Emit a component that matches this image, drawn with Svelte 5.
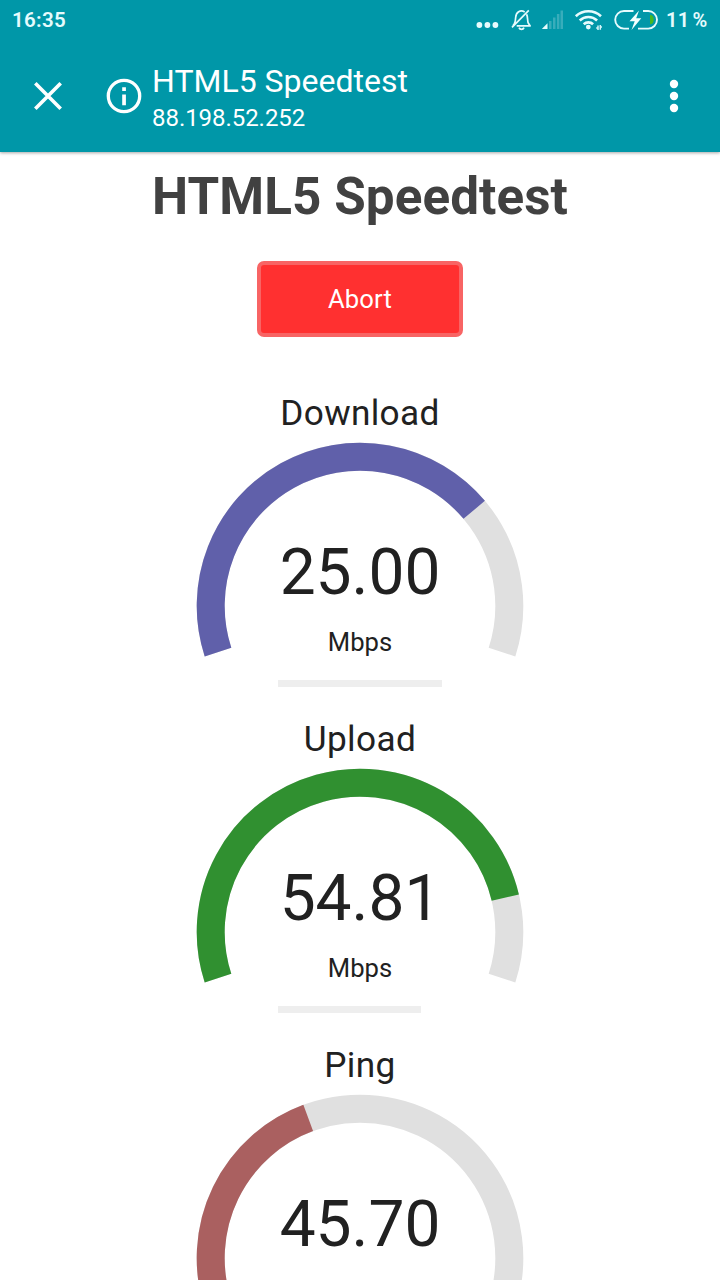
<script>
  const tests = [
    { name: 'Download', value: '25.00', unit: 'Mbps', color: '#6060aa', sweep: 157.9, progress: 164 },
    { name: 'Upload', value: '54.81', unit: 'Mbps', color: '#309030', sweep: 184.7, progress: 143 },
    { name: 'Ping', value: '45.70', unit: '', color: '#aa6060', sweep: 87.7, progress: 0 }
  ];
  const radius = 149.3;

  // Arc starting 18 degrees below the left horizontal, running clockwise.
  function arc(sweep) {
    const point = (deg) => {
      const a = (deg * Math.PI) / 180;
      return `${180 + radius * Math.cos(a)} ${164 + radius * Math.sin(a)}`;
    };
    return `M${point(162)}A${radius} ${radius} 0 ${sweep > 180 ? 1 : 0} 1 ${point(162 + sweep)}`;
  }
</script>

<div class="screen">
  <header>
    <div class="status">
      <span class="clock">16:35</span>
      <svg class="indicators" width="190" height="40" viewBox="470 0 190 40" fill="none">
        <g fill="#e6fbfd">
          <circle cx="479.4" cy="25" r="2.9" /><circle cx="487.4" cy="25" r="2.9" /><circle cx="495.4" cy="25" r="2.9" />
        </g>
        <g stroke="#e6fbfd" stroke-width="1.7" stroke-linejoin="round">
          <path d="M526.6 14.200c1.200 2 .8 6.200 1.500 8.600l2.100 3.100h-13.500M524.700 11.900c-4.500-2.500-8.700.5-9 5.300-.2 3-.4 4.500-1.200 6.200l-1.500 2.400M528.800 10.300l-16.800 17.100" />
          <path d="M519 27.600a2.700 2.700 0 0 0 5 0" />
        </g>
        <path d="M541.800 29l5.700-5.700V29z" fill="#e6fbfd" />
        <path d="M549 21h2.500v8H549zM553 17.500h2.500V29H553zM556.900 14h2.500v15h-2.500zM560.500 10.500h2.500V29h-2.500z" fill="#fff" opacity=".22" />
        <g stroke="#e6fbfd" stroke-width="2.600">
          <path d="M575.800 16.200a18.500 18.500 0 0 1 25.200 0M579.700 20.500a12.700 12.700 0 0 1 17.400 0M583.700 24.300a6.800 6.800 0 0 1 9.400 0" />
        </g>
        <circle cx="588.300" cy="27.100" r="2.400" fill="#e6fbfd" />
        <path d="M598 30v-4.500M600.300 25v4.700M596.200 28h1.500M600.500 27h1.500" stroke="#d3f5f8" stroke-width="1.500" />
        <g stroke="#e6fbfd" stroke-width="1.900">
          <path d="M633.500 11H624a8.800 8.800 0 0 0 0 17.600h5M643 11h5.200a8.800 8.800 0 0 1 0 17.600H638" />
        </g>
        <path d="M639 10.600L629.500 21.300h5.200l-3.200 8.700L641.300 18.200h-5.100z" fill="#f3ffff" />
        <path d="M650 15h.5c2.200 0 3.200 2 3.200 4.600s-1 4.600-3.200 4.600h-.5z" fill="#43b821" />
      </svg>
      <span class="percent">11 %</span>
    </div>
    <div class="toolbar">
      <svg class="close" width="32" height="32" viewBox="0 0 32 32"><path d="M3.300 3.300l25.400 25.400M28.700 3.300L3.300 28.700" stroke="#fff" stroke-width="3.600" /></svg>
      <svg class="info" width="36" height="36" viewBox="0 0 36 36"><circle cx="18" cy="18" r="15.700" fill="none" stroke="#fff" stroke-width="3.300" /><path d="M16.200 9.200h3.700v3.700h-3.700zM16.200 16.600h3.700v10.600h-3.700z" fill="#fff" /></svg>
      <div class="site">
        <div class="title">HTML5 Speedtest</div>
        <div class="host">88.198.52.252</div>
      </div>
      <svg class="more" width="12" height="36" viewBox="0 0 12 36" fill="#fff"><circle cx="6" cy="6" r="4.200" /><circle cx="6" cy="18" r="4.200" /><circle cx="6" cy="30" r="4.200" /></svg>
    </div>
  </header>
  <main>
    <h1>HTML5 Speedtest</h1>
    <button>Abort</button>
    {#each tests as t}
      <section>
        <h2>{t.name}</h2>
        <div class="gauge">
          <svg width="360" height="240" viewBox="0 0 360 240" fill="none" stroke-width="28">
            <path d={arc(216)} stroke="#e0e0e0" />
            <path d={arc(t.sweep)} stroke={t.color} />
          </svg>
          <div class="reading">
            <div class="value">{t.value}</div>
            {#if t.unit}<div class="unit">{t.unit}</div>{/if}
          </div>
        </div>
        <div class="track"><div class="bar" style="width: {t.progress}px"></div></div>
      </section>
    {/each}
  </main>
</div>

<style>
  :global(body) { background: #fff; overflow: hidden; }
  .screen { width: 720px; height: 1280px; overflow: hidden; background: #fff; color: #212121; font-family: Roboto, sans-serif; }
  header { height: 152px; background: #0097a8; color: #fff; box-shadow: 0 1px 3px rgba(0, 0, 0, .35); }
  .status { display: flex; height: 40px; color: #e6fbfd; font-size: 20.500px; font-weight: 600; line-height: 41px; }
  .clock { width: 458px; padding-left: 12px; letter-spacing: .3px; }
  .percent { padding-left: 6px; font-size: 20px; letter-spacing: .2px; word-spacing: -2px; white-space: nowrap; }
  .toolbar { display: flex; align-items: center; height: 112px; padding-left: 32px; }
  .info { margin-left: 42px; }
  .site { width: 516px; margin-left: 10px; }
  .title { font-size: 32px; line-height: 38px; margin-top: 2px; }
  .host { font-size: 24px; line-height: 28px; margin-top: 4px; letter-spacing: -.05px; }
  main { display: flex; flex-direction: column; align-items: center; }
  h1 { margin: 15px 0 0; font-size: 51.200px; line-height: 60px; color: #414141; font-weight: 700; letter-spacing: .08px; white-space: nowrap; }
  button { box-sizing: border-box; width: 206px; height: 76px; margin: 34px 0 53px; padding: 0 0 1px; border: 4px solid #f86464; border-radius: 7px; background: #ff3030; color: #fff; font: 25.600px Roboto, sans-serif; letter-spacing: .1px; }
  section { display: flex; flex-direction: column; align-items: center; width: 360px; height: 326px; flex: none; }
  h2 { margin: 0; height: 52px; font-size: 35.200px; line-height: 46px; font-weight: 400; letter-spacing: .35px; }
  .gauge { display: grid; height: 238px; }
  .gauge svg, .reading { grid-area: 1 / 1; }
  .reading { padding-top: 93px; text-align: center; }
  .value { font-size: 64px; line-height: 76px; }
  .unit { font-size: 25.600px; line-height: 30px; margin-top: 16px; }
  .track { width: 164px; height: 7px; }
  .bar { height: 7px; background: #eee; }
</style>
